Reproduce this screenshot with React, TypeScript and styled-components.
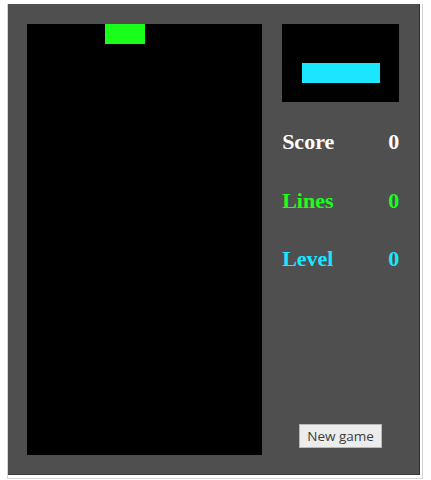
import styled, { createGlobalStyle } from "styled-components";

const GREEN = "#1aff1a";
const CYAN = "#1ae6ff";

const GlobalStyle = createGlobalStyle`
  html, body {
    margin: 0;
    padding: 0;
    background: #ffffff;
  }
`;

type Grid = (string | null)[][];

const makeGrid = (cols: number, rows: number): Grid =>
  Array.from({ length: rows }, () => Array.from({ length: cols }, () => null));

const board = makeGrid(12, 22);
board[0][4] = GREEN;
board[0][5] = GREEN;

const preview = makeGrid(6, 4);
for (let c = 1; c <= 4; c++) preview[2][c] = CYAN;

const stats = [
  { label: "Score", value: 0, color: "#ffffff" },
  { label: "Lines", value: 0, color: GREEN },
  { label: "Level", value: 0, color: CYAN },
];

const App = () => {
  return (
    <>
      <GlobalStyle />
      <Frame>
        <Panel>
          <Field $cols={12} $rows={22} $cell={19.6}>
            {board.flat().map((color, i) => (
              <Cell key={i} $color={color} />
            ))}
          </Field>
          <Side>
            <Field $cols={6} $rows={4} $cell={19.5}>
              {preview.flat().map((color, i) => (
                <Cell key={i} $color={color} />
              ))}
            </Field>
            <Stats>
              {stats.map((s) => (
                <StatRow key={s.label} $color={s.color}>
                  <span>{s.label}</span>
                  <span>{s.value}</span>
                </StatRow>
              ))}
            </Stats>
            <NewGameButton type="button">New game</NewGameButton>
          </Side>
        </Panel>
      </Frame>
    </>
  );
};

const Frame = styled.div`
  margin: 4px 0 0 7px;
  width: 413px;
  padding: 0 1px 3px 0;
  border: 1px solid #d4d4d4;
  border-top: none;
`;

const Panel = styled.div`
  display: flex;
  gap: 20px;
  width: 412px;
  box-sizing: border-box;
  padding: 20px 20px 19px 19px;
  background: #4f4f4f;
  border-right: 1px solid #2f2f2f;
  border-bottom: 1px solid #3a3a3a;
`;

const Field = styled.div<{ $cols: number; $rows: number; $cell: number }>`
  display: grid;
  grid-template-columns: repeat(${(p) => p.$cols}, ${(p) => p.$cell}px);
  grid-template-rows: repeat(${(p) => p.$rows}, ${(p) => p.$cell}px);
  background: #000000;
  flex-shrink: 0;
`;

const Cell = styled.div<{ $color: string | null }>`
  background: ${(p) => p.$color ?? "transparent"};
`;

const Side = styled.div`
  display: flex;
  flex-direction: column;
  width: 117px;
`;

const Stats = styled.div`
  display: flex;
  flex-direction: column;
  gap: 33.5px;
  margin-top: 27px;
`;

const StatRow = styled.div<{ $color: string }>`
  display: flex;
  justify-content: space-between;
  height: 25px;
  line-height: 25px;
  font-family: "Liberation Serif", "Times New Roman", serif;
  font-weight: bold;
  font-size: 22px;
  color: ${(p) => p.$color};
`;

const NewGameButton = styled.button`
  align-self: center;
  margin-top: auto;
  margin-bottom: 7px;
  width: 83px;
  height: 24px;
  padding: 0;
  font-family: "Open Sans", "Noto Sans", sans-serif;
  font-size: 13.5px;
  color: #3c3c3c;
  background: #ececec;
  border: 1px solid #b8b8b8;
  border-radius: 0;
  cursor: pointer;
`;

export default App;
